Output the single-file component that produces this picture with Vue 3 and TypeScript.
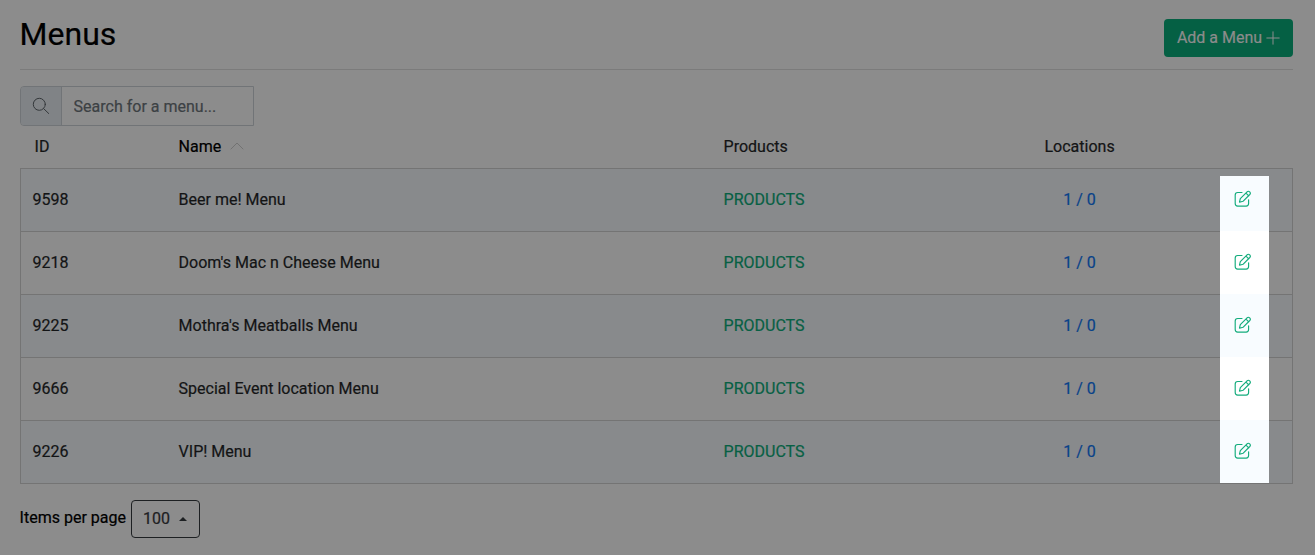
<script setup lang="ts">
interface Menu {
  id: number
  name: string
  locations: string
}

const menus: Menu[] = [
  { id: 9598, name: 'Beer me! Menu', locations: '1 / 0' },
  { id: 9218, name: "Doom's Mac n Cheese Menu", locations: '1 / 0' },
  { id: 9225, name: "Mothra's Meatballs Menu", locations: '1 / 0' },
  { id: 9666, name: 'Special Event location Menu', locations: '1 / 0' },
  { id: 9226, name: 'VIP! Menu', locations: '1 / 0' },
]
</script>

<template>
  <main class="page">
    <header class="top">
      <h1>Menus</h1>
      <button class="add">
        <span>Add a Menu</span>
        <svg width="14" height="14" viewBox="0 0 14 14"><path d="M7 .8v12.4M.8 7h12.4" /></svg>
      </button>
    </header>

    <div class="search">
      <span class="search-icon">
        <svg width="18" height="18" viewBox="0 0 18 18"><circle cx="7.3" cy="7.3" r="6" /><path d="M11.7 11.7l5 4.8" /></svg>
      </span>
      <input type="text" placeholder="Search for a menu..." />
    </div>

    <div class="grid-row head">
      <span class="head-id">ID</span>
      <span class="sorted">Name
        <svg width="14" height="8" viewBox="0 0 14 8"><path d="M1 7l6-6 6 6" /></svg>
      </span>
      <span>Products</span>
      <span class="center">Locations</span>
    </div>

    <section class="table">
      <div v-for="menu in menus" :key="menu.id" class="grid-row item">
        <span>{{ menu.id }}</span>
        <span>{{ menu.name }}</span>
        <a class="products">PRODUCTS</a>
        <a class="locations center">{{ menu.locations }}</a>
      </div>
      <div class="spotlight">
        <button v-for="menu in menus" :key="menu.id" class="edit" :aria-label="`Edit ${menu.name}`">
          <svg width="18" height="18" viewBox="0 0 18 18">
            <path d="M8 2.5H3.7Q1.2 2.5 1.2 5v8.6q0 2.5 2.5 2.5h8.4q2.5 0 2.5-2.5V9.8" />
            <path d="M5.5 12.2l.8-3.5 6.8-6.9q1.3-1.1 2.6.1 1.3 1.3.1 2.6L9 11.3zM12 3.1l2.7 2.7" />
          </svg>
        </button>
      </div>
    </section>

    <footer>
      <span class="size-label">Items per page</span>
      <button class="size">100 <i class="caret"></i></button>
    </footer>
  </main>
</template>

<style>
body {
  background: #8c8c8c;
  overflow: hidden;
}
</style>

<style scoped>
.page {
  box-sizing: border-box;
  height: 555px;
  padding: 0 22.4px 0 19.6px;
  background: #8c8c8c;
  color: #131415;
  font: 16px/24px Roboto, sans-serif;
  -webkit-text-stroke: 0.2px currentColor;
}
button {
  font: inherit;
  box-sizing: border-box;
}
svg {
  fill: none;
  stroke: currentColor;
  stroke-linecap: round;
  stroke-linejoin: round;
}
.top {
  display: flex;
  justify-content: space-between;
  height: 69px;
  border-bottom: 1px solid #7b7b7b;
}
h1 {
  margin: 14px 0 0;
  font-size: 32px;
  line-height: 40px;
  font-weight: 400;
  color: #000;
}
.add {
  display: flex;
  align-items: center;
  justify-content: center;
  gap: 4px;
  width: 129px;
  height: 38px;
  margin-top: 19px;
  margin-right: -0.4px;
  padding: 0;
  border: 0;
  border-radius: 4px;
  background: #056044;
  color: #8c8c8c;
}
.search {
  display: flex;
  box-sizing: border-box;
  width: 234px;
  height: 40px;
  margin-top: 16px;
  border: 1px solid #717477;
  border-radius: 4px 0 0 4px;
}
.search-icon {
  display: flex;
  align-items: center;
  justify-content: center;
  width: 40px;
  border-right: 1px solid #717477;
  background: #808386;
  color: #34383b;
  border-radius: 3px 0 0 3px;
}
input {
  flex: 1;
  min-width: 0;
  padding: 2px 12px 0;
  border: 0;
  background: transparent;
  font: inherit;
}
input::placeholder {
  color: #3c4144;
  opacity: 1;
}
.grid-row {
  display: grid;
  grid-template-columns: 146px 545px 281px 150px 1fr;
  align-items: center;
  padding-left: 12px;
}
.head {
  height: 42px;
  padding-left: 13px;
}
.head-id {
  padding-left: 2px;
}
.sorted {
  color: #000;
}
.sorted svg {
  margin-left: 5px;
  vertical-align: 2px;
  color: #727272;
}
.center {
  text-align: center;
}
.table {
  position: relative;
  border: 1px solid #747474;
}
.item {
  height: 62px;
  background: #8c8c8c;
}
.item + .item {
  border-top: 1px solid #747474;
}
.item:nth-child(odd) {
  background: #888a8c;
}
.products {
  color: #076044;
}
.locations {
  color: #084289;
}
.spotlight {
  position: absolute;
  top: 7px;
  right: 22.6px;
  width: 49px;
  display: grid;
  grid-template-rows: 55px repeat(4, 63px);
}
.edit {
  display: flex;
  align-items: center;
  justify-content: center;
  padding: 0 4px 1px 0;
  border: 0;
  background: #fff;
  color: #13ac7c;
}
.edit svg {
  stroke-width: 1.15;
}
.edit:nth-child(odd) {
  background: #f8fcff;
}
.edit:first-child {
  padding-bottom: 9px;
}
footer {
  display: flex;
  align-items: center;
  gap: 5px;
  height: 38px;
  margin-top: 16px;
  color: #000;
}
.size-label {
  padding-bottom: 2px;
}
.size {
  display: flex;
  align-items: center;
  gap: 9px;
  width: 69px;
  height: 38px;
  padding: 0 11px;
  border: 1px solid #1d2022;
  border-radius: 4px;
  background: transparent;
  color: #1d2022;
}
.caret {
  border: 4px solid transparent;
  border-top: 0;
  border-bottom-color: #1d2022;
}
</style>
